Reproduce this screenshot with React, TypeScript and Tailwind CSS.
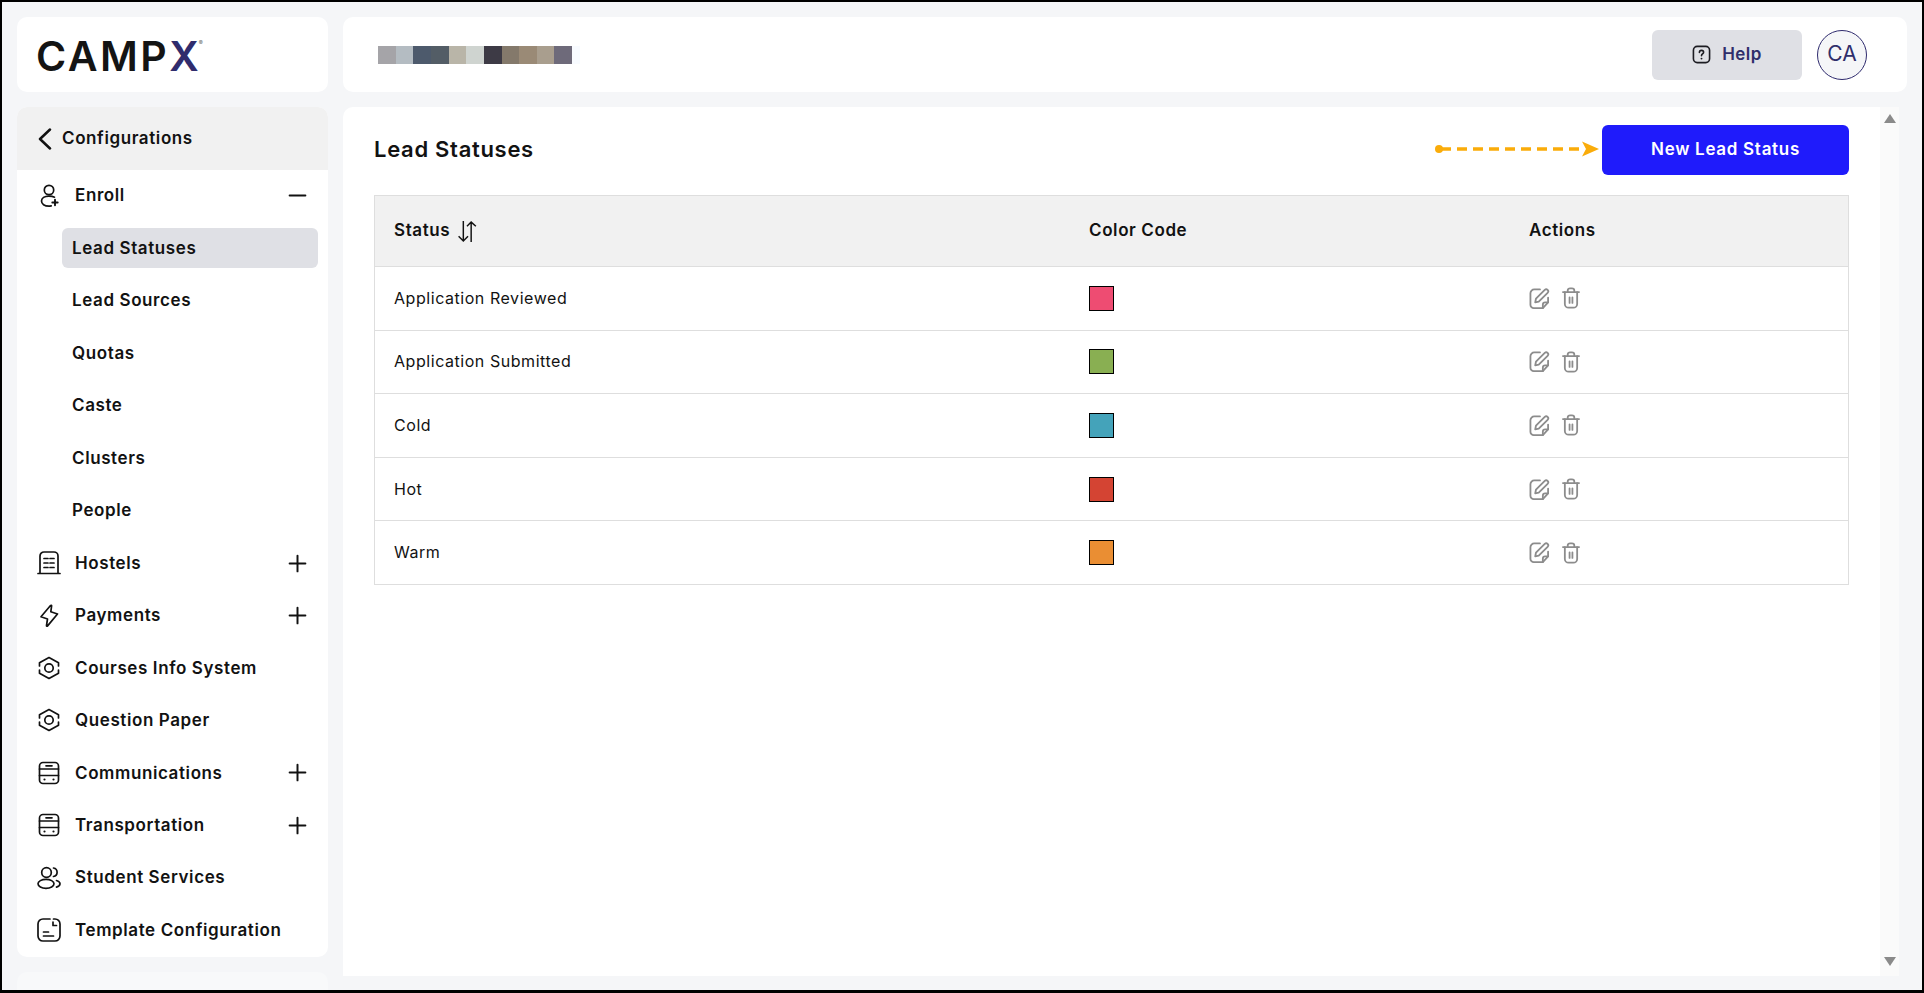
import { Minus, Plus } from 'lucide-react'

const stroke = { fill: 'none', stroke: 'currentColor', strokeWidth: 1.7, strokeLinecap: 'round', strokeLinejoin: 'round' } as const

function EnrollIcon() {
  return (
    <svg viewBox="0 0 24 24" className="w-6 h-6" {...stroke}>
      <circle cx="12" cy="7" r="4.700" />
      <path d="M17.500 14.200c-1.300-.7-3.200-1.100-5.500-1.100-4.500 0-7.500 2-7.500 5s3 5 7.500 5c.8 0 1.500-.1 2.200-.2" />
      <path d="M18 16.800v5.400M15.300 19.500h5.400" strokeWidth="1.900" />
    </svg>
  )
}

function HostelIcon() {
  return (
    <svg viewBox="0 0 24 24" className="w-6 h-6" {...stroke}>
      <path d="M1 22.500h22M3 22V5a4 4 0 0 1 4-4h10a4 4 0 0 1 4 4v17" />
      <path d="M7 7.500h4M13 7.500h4M7 12h4M13 12h4M7 16.500h4M13 16.500h4" />
    </svg>
  )
}

function BoltIcon() {
  return (
    <svg viewBox="0 0 24 24" className="w-6 h-6" {...stroke}>
      <path d="M13.500 1.500 4 12.800l6.500 2.200-1 6.500c-.1.800.600 1 1.100.4L20.500 10l-6.700-2.200.8-5.800c.1-.7-.6-1-1.100-.5z" />
    </svg>
  )
}

function HexIcon() {
  return (
    <svg viewBox="0 0 24 24" className="w-6 h-6" {...stroke}>
      <path d="M2.500 10V6.800L12 1.500l9.500 5.300V10M2.500 14v3.200l9.500 5.300 9.500-5.300V14" />
      <circle cx="12" cy="12" r="4.200" />
    </svg>
  )
}

function BusIcon() {
  return (
    <svg viewBox="0 0 24 24" className="w-6 h-6" {...stroke}>
      <rect x="2.500" y="1.500" width="19" height="21" rx="3.500" />
      <path d="M2.500 8h19M2.500 14.500h19M9 4.800h6" />
      <path d="M7.500 18.500h.01M16.500 18.500h.01" strokeWidth="2.200" />
    </svg>
  )
}

function PeopleIcon() {
  return (
    <svg viewBox="0 0 24 24" className="w-6 h-6" {...stroke}>
      <circle cx="9.500" cy="6.500" r="4.800" />
      <ellipse cx="9" cy="17.800" rx="8" ry="4.500" />
      <path d="M16.500 2c2.300.4 3.600 2.200 3.600 4.300s-1.300 3.800-3.600 4.200M19.500 14.500c2.300.7 3.500 2 3.500 3.300s-1.200 2.700-3.500 3.300" />
    </svg>
  )
}

function TemplateIcon() {
  return (
    <svg viewBox="0 0 24 24" className="w-6 h-6" {...stroke}>
      <path d="M13 1H6a5 5 0 0 0-5 5v12a5 5 0 0 0 5 5h12a5 5 0 0 0 5-5V6a5 5 0 0 0-5-5h-1.500" />
      <path d="M16 4v3.500h3.500M6.500 14h5M6.500 18h10" />
    </svg>
  )
}

function SortIcon() {
  return (
    <svg viewBox="0 0 20 22" className="w-[21px] h-[23px]" fill="none" stroke="currentColor" strokeWidth="1.400">
      <path d="M6 1v19M1.500 15.500 6 20l4.500-4.500M13.500 21V2M9.500 6l4-4 4.500 4" />
    </svg>
  )
}

function EditIcon() {
  return (
    <svg viewBox="1 1 21 22" className="w-[21px] h-[21px] text-[#8c8c8c]" {...stroke} strokeWidth={1.9}>
      <path d="M12 2.500H6a4 4 0 0 0-4 4v12a3.500 3.500 0 0 0 3.500 3.500H15l5.500-6V11" />
      <path d="M15 22v-3.500a2.500 2.500 0 0 1 2.500-2.500h3" />
      <path d="m7 16 .8-3.800L17 3a2 2 0 0 1 3 3l-9.300 9.200z" />
    </svg>
  )
}

function TrashIcon() {
  return (
    <svg viewBox="0.500 0.500 19 22.500" className="w-[18px] h-[22px] text-[#8c8c8c]" {...stroke} strokeWidth={1.9}>
      <path d="M1.500 5.500h17M6.500 5.500V4A2.500 2.500 0 0 1 9 1.500h2A2.500 2.500 0 0 1 13.500 4v1.500" />
      <path d="M3.500 5.500V18a4 4 0 0 0 4 4h5a4 4 0 0 0 4-4V5.500M8.500 11v6M11.500 11v6" />
    </svg>
  )
}

function HelpIcon() {
  return (
    <svg viewBox="0 0 20 20" className="w-[19px] h-[19px] text-[#1c1c22]" {...stroke}>
      <rect x="1.500" y="1.500" width="17" height="17" rx="4" />
      <path d="M7.800 7.800c0-1.300 1-2.200 2.200-2.200s2.200.9 2.200 2.100c0 1.700-2.200 1.800-2.200 3.500" />
      <path d="M10 14.300h.01" strokeWidth="2" />
    </svg>
  )
}

const menuTop = [
  { label: 'Hostels', icon: <HostelIcon />, expand: true },
  { label: 'Payments', icon: <BoltIcon />, expand: true },
  { label: 'Courses Info System', icon: <HexIcon /> },
  { label: 'Question Paper', icon: <HexIcon /> },
  { label: 'Communications', icon: <BusIcon />, expand: true },
  { label: 'Transportation', icon: <BusIcon />, expand: true },
  { label: 'Student Services', icon: <PeopleIcon /> },
  { label: 'Template Configuration', icon: <TemplateIcon /> },
]

const subItems = ['Lead Statuses', 'Lead Sources', 'Quotas', 'Caste', 'Clusters', 'People']

const rows = [
  { name: 'Application Reviewed', color: 'bg-[#ee4c72]' },
  { name: 'Application Submitted', color: 'bg-[#89af52]' },
  { name: 'Cold', color: 'bg-[#44a3ba]' },
  { name: 'Hot', color: 'bg-[#d44433]' },
  { name: 'Warm', color: 'bg-[#ea8e33]' },
]

const pixels = [
  'w-[18px] bg-[#a5a4a8]',
  'w-[17px] bg-[#b4bcc2]',
  'w-[18px] bg-[#4d5a6c]',
  'w-[18px] bg-[#535d66]',
  'w-[17px] bg-[#b9b5a8]',
  'w-[18px] bg-[#cfd4d0]',
  'w-[18px] bg-[#3d3a45]',
  'w-[17px] bg-[#84796b]',
  'w-[18px] bg-[#9a8a76]',
  'w-[17px] bg-[#a99e8e]',
  'w-[18px] bg-[#6e6a7a]',
  'w-[8px] bg-[#f8fbff]',
]

export default function App() {
  return (
    <div className="w-[1924px] h-[993px] overflow-hidden border-t-2 border-l-2 border-b-[3px] border-r-2 border-black bg-[#f5f6f8] font-['Inter',sans-serif] text-[#121212] flex gap-[15px] pl-[15px] pt-[15px]">
      {/* Left column */}
      <div className="w-[311px] shrink-0 flex flex-col gap-[15px]">
        <div className="h-[75px] shrink-0 bg-white rounded-[10px] flex items-center pl-[19px] pt-[3px]">
          <span className="relative text-[41px] leading-none font-semibold tracking-[2.500px] text-[#141414]">
            CAMP<span className="text-[#302c6d] tracking-normal">X</span>
            <span className="absolute -right-[4px] top-[4px] text-[6px] leading-none font-normal tracking-normal text-[#666]">®</span>
          </span>
        </div>

        <div className="h-[850px] shrink-0 bg-white rounded-[10px] overflow-hidden">
          <div className="h-[63px] bg-[#f1f1f1] flex items-center pl-[21px] gap-[10px] text-[17px] font-semibold tracking-[0.6px]">
            <svg viewBox="0 0 14 22" className="w-[14px] h-[22px]" fill="none" stroke="currentColor" strokeWidth="2.500" strokeLinecap="round" strokeLinejoin="round">
              <path d="M12 1.500 2 11l10 9.500" />
            </svg>
            Configurations
          </div>

          <div className="flex flex-col text-[17px] font-semibold">
            <div className="h-[50px] flex items-center pl-[20px] pr-[17px] tracking-[0.6px]">
              <EnrollIcon />
              <span className="ml-[14px] pt-px flex-1">Enroll</span>
              <Minus className="w-[27px] h-[27px]" strokeWidth={1.75} />
            </div>
            <div className="flex flex-col gap-[12.500px] pl-[45px] pr-[10px] mt-2">
              {subItems.map((item, i) => (
                <div
                  key={item}
                  className={`h-10 flex items-center pl-[10px] pt-px rounded-[6px] tracking-[0.6px] ${i === 0 ? 'bg-[#dfe0e5]' : ''}`}
                >
                  {item}
                </div>
              ))}
            </div>
            <div className="flex flex-col mt-[6.500px]">
              {menuTop.map((item) => (
                <div key={item.label} className="h-[52.400px] flex items-center pl-[20px] pr-[17px] tracking-[0.6px]">
                  {item.icon}
                  <span className="ml-[14px] pt-px flex-1">{item.label}</span>
                  {item.expand && <Plus className="w-[27px] h-[27px]" strokeWidth={1.75} />}
                </div>
              ))}
            </div>
          </div>
        </div>

        <div className="h-[40px] shrink-0 bg-[#f8f9fa] rounded-t-[10px]" />
      </div>

      {/* Right column */}
      <div className="flex-1 flex flex-col gap-[15px] min-w-0">
        <div className="h-[75px] shrink-0 mr-[15px] bg-white rounded-[10px] flex items-center justify-between pl-[35px] pr-10">
          <div className="flex h-[18px]">
            {pixels.map((p, i) => (
              <div key={i} className={p} />
            ))}
          </div>
          <div className="flex items-center gap-[15px]">
            <button className="w-[150px] h-[50px] bg-[#dfe0e5] rounded-[6px] flex items-center justify-center gap-[11px] text-[17px] font-semibold tracking-[0.4px] text-[#2f2e6b]">
              <HelpIcon />
              Help
            </button>
            <div className="w-[50px] h-[50px] pb-[2px] rounded-full border border-[#2f2b6e] bg-[#f5f6f8] flex items-center justify-center text-[21px] text-[#2f2e6b]">
              CA
            </div>
          </div>
        </div>

        <div className="h-[869px] shrink-0 mr-[23px] bg-white rounded-tl-[10px] flex">
          <div className="flex-1 pl-[31px] pr-[31px] pt-[18px] min-w-0">
            <div className="h-[50px] flex items-center justify-between">
              <h1 className="text-[22px] pb-[2px] font-semibold tracking-[0.7px]">Lead Statuses</h1>
              <div className="flex items-center gap-[3px]">
                <svg viewBox="0 0 164 20" className="w-[164px] h-5 mb-[2px]" fill="none">
                  <circle cx="4" cy="10" r="4" fill="#faac0a" />
                  <path d="M6 10h144" stroke="#faac0a" strokeWidth="3.500" strokeDasharray="10 6" />
                  <path d="M147 2.500 164 10l-17 7.500 4-7.500z" fill="#faac0a" />
                </svg>
                <button className="w-[247px] h-[50px] bg-[#1f1bfb] rounded-[6px] text-white text-[17px] font-semibold tracking-[0.7px]">
                  New Lead Status
                </button>
              </div>
            </div>

            <div className="mt-5 border border-[#dedede] border-b-0">
              <div className="h-[71px] bg-[#f1f1f1] border-b border-[#dedede] grid grid-cols-[694px_440px_1fr] items-center font-semibold text-[17px] tracking-[0.6px]">
                <div className="pl-[19px] flex items-center gap-[7px]">
                  Status
                  <SortIcon />
                </div>
                <div className="pl-5">Color Code</div>
                <div className="pl-5">Actions</div>
              </div>
              {rows.map((row) => (
                <div key={row.name} className="h-[63.600px] border-b border-[#dedede] grid grid-cols-[694px_440px_1fr] items-center text-[16px] tracking-[0.55px]">
                  <div className="pl-[19px] pb-px">{row.name}</div>
                  <div className="pl-5">
                    <div className={`w-[25px] h-[25px] border border-black ${row.color}`} />
                  </div>
                  <div className="pl-5 flex items-center gap-3">
                    <EditIcon />
                    <TrashIcon />
                  </div>
                </div>
              ))}
            </div>
          </div>

          <div className="w-[19px] shrink-0 bg-[#fafafa] flex flex-col justify-between items-center pt-[7px] pb-[10px]">
            <div className="w-0 h-0 border-x-[6.500px] border-x-transparent border-b-[9px] border-b-[#8a8a8a]" />
            <div className="w-0 h-0 border-x-[6.500px] border-x-transparent border-t-[9px] border-t-[#8a8a8a]" />
          </div>
        </div>
      </div>
    </div>
  )
}
